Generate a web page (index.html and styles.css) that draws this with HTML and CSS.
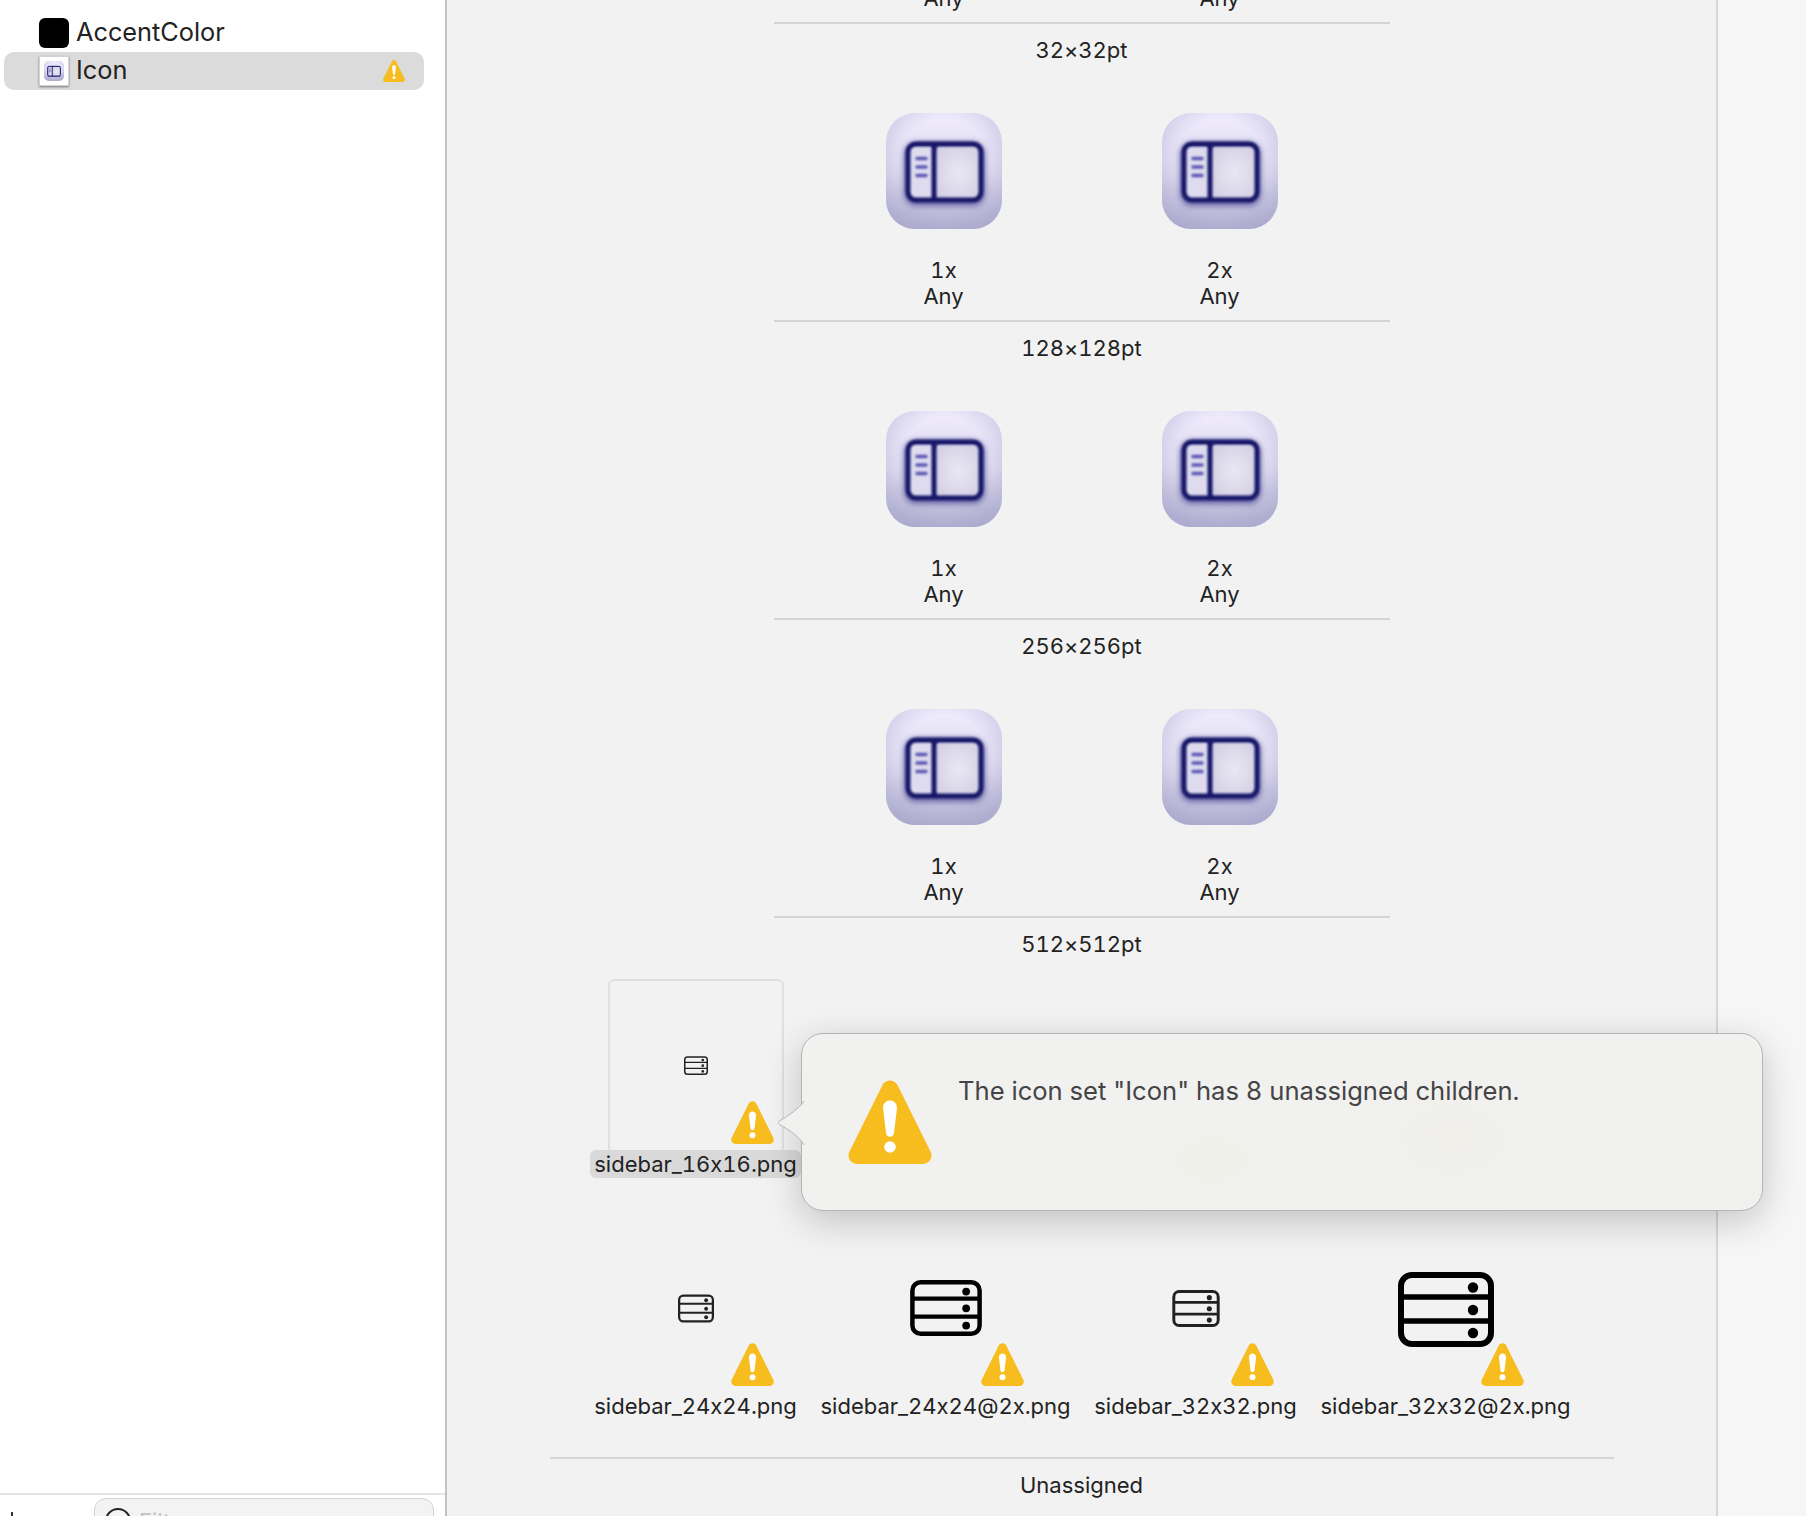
FILE: index.html
```html
<!DOCTYPE html>
<html lang="en">
<head>
<meta charset="utf-8">
<title>Icon set</title>
<link rel="stylesheet" href="styles.css">
</head>
<body>
<svg class="defs" aria-hidden="true">
  <defs>
    <linearGradient id="tile" x1="0" y1="0" x2="0" y2="1">
      <stop offset="0" stop-color="#f1edfe"/>
      <stop offset=".5" stop-color="#dcd8ee"/>
      <stop offset="1" stop-color="#b4b3d3"/>
    </linearGradient>
    <radialGradient id="vignette" cx=".5" cy=".45" r=".72">
      <stop offset=".55" stop-color="#9c9ac4" stop-opacity="0"/>
      <stop offset="1" stop-color="#9c9ac4" stop-opacity=".55"/>
    </radialGradient>
    <radialGradient id="pane" cx=".5" cy=".5" r=".7">
      <stop offset="0" stop-color="#eae7f3"/>
      <stop offset="1" stop-color="#cfcce2"/>
    </radialGradient>
    <filter id="soft" x="-20%" y="-20%" width="140%" height="140%"><feGaussianBlur stdDeviation="3"/></filter>
    <filter id="crisp" x="-10%" y="-10%" width="120%" height="120%"><feGaussianBlur stdDeviation=".8"/></filter>
    <symbol id="app" viewBox="0 0 116 116">
      <rect width="116" height="116" rx="29" fill="url(#tile)"/>
      <rect width="116" height="116" rx="29" fill="url(#vignette)"/>
      <rect x="22" y="33" width="73" height="56" rx="8" fill="none" stroke="#5e5ca0" stroke-width="7" filter="url(#soft)"/>
      <rect x="50" y="33" width="45" height="54" rx="5" fill="url(#pane)"/>
      <rect x="22" y="33" width="26" height="54" rx="5" fill="#dedbee"/>
      <g filter="url(#crisp)">
        <rect x="22" y="31" width="73" height="56" rx="8" fill="none" stroke="#161468" stroke-width="5"/>
        <path d="M48 31v56" stroke="#161468" stroke-width="5"/>
        <path d="M31 45.500h9M31 54h9M31 62.500h9" stroke="#5b58b2" stroke-width="3.500" stroke-linecap="round"/>
      </g>
    </symbol>
    <symbol id="server" viewBox="0 0 96 75">
      <rect x="3" y="3" width="90" height="69" rx="11" fill="none" stroke="currentColor" stroke-width="6"/>
      <path d="M3 25h90M3 49h90" stroke="currentColor" stroke-width="5.500"/>
      <circle cx="75" cy="15.500" r="5.200" fill="currentColor"/>
      <circle cx="75" cy="38" r="5.200" fill="currentColor"/>
      <circle cx="75" cy="61" r="5.200" fill="currentColor"/>
    </symbol>
    <symbol id="warn" viewBox="0 0 84 84">
      <path d="M42 9 9 75.500h66z" fill="#f7bc1e" stroke="#f7bc1e" stroke-width="17" stroke-linejoin="round"/>
      <path d="M35 28c0-10 14-10 14 0l-3 25c-.500 5-7.500 5-8 0z" fill="#fff"/>
      <circle cx="42" cy="67" r="5.800" fill="#fff"/>
    </symbol>
  </defs>
</svg>

<div class="window">
  <aside class="sidebar">
    <ul class="asset-list">
      <li class="asset">
        <span class="swatch"></span>
        <span class="asset-name">AccentColor</span>
      </li>
      <li class="asset asset-selected">
        <span class="asset-thumb"><svg class="asset-thumb-art"><use href="#app"/></svg></span>
        <span class="asset-name">Icon</span>
        <svg class="asset-warn"><use href="#warn"/></svg>
      </li>
    </ul>
    <div class="sidebar-footer">
      <span class="plus"></span>
      <div class="filter">
        <span class="filter-icon"></span>
        <span class="filter-text">Filter</span>
      </div>
    </div>
  </aside>

  <main class="canvas">
    <div class="group group-first">
      <div class="slots">
        <div class="slot"><div class="caption">Any</div></div>
        <div class="slot"><div class="caption">Any</div></div>
      </div>
      <div class="group-label">32×32pt</div>
    </div>

    <div class="group">
      <div class="slots">
        <div class="slot"><svg class="app-icon"><use href="#app"/></svg><div class="caption">1x<br>Any</div></div>
        <div class="slot"><svg class="app-icon"><use href="#app"/></svg><div class="caption">2x<br>Any</div></div>
      </div>
      <div class="group-label">128×128pt</div>
    </div>

    <div class="group">
      <div class="slots">
        <div class="slot"><svg class="app-icon"><use href="#app"/></svg><div class="caption">1x<br>Any</div></div>
        <div class="slot"><svg class="app-icon"><use href="#app"/></svg><div class="caption">2x<br>Any</div></div>
      </div>
      <div class="group-label">256×256pt</div>
    </div>

    <div class="group">
      <div class="slots">
        <div class="slot"><svg class="app-icon"><use href="#app"/></svg><div class="caption">1x<br>Any</div></div>
        <div class="slot"><svg class="app-icon"><use href="#app"/></svg><div class="caption">2x<br>Any</div></div>
      </div>
      <div class="group-label">512×512pt</div>
    </div>

    <div class="group group-wide">
      <div class="unassigned">
        <div class="cell">
          <div class="well well-active">
            <svg class="glyph glyph-16"><use href="#server"/></svg>
            <svg class="well-warn"><use href="#warn"/></svg>
          </div>
          <div class="file file-active">sidebar_16x16.png</div>
        </div>
        <div class="cell cell-empty"></div>
        <div class="cell cell-empty"></div>
        <div class="cell cell-empty"></div>
        <div class="cell">
          <div class="well">
            <svg class="glyph glyph-24"><use href="#server"/></svg>
            <svg class="well-warn"><use href="#warn"/></svg>
          </div>
          <div class="file">sidebar_24x24.png</div>
        </div>
        <div class="cell">
          <div class="well">
            <svg class="glyph glyph-48"><use href="#server"/></svg>
            <svg class="well-warn"><use href="#warn"/></svg>
          </div>
          <div class="file">sidebar_24x24@2x.png</div>
        </div>
        <div class="cell">
          <div class="well">
            <svg class="glyph glyph-32"><use href="#server"/></svg>
            <svg class="well-warn"><use href="#warn"/></svg>
          </div>
          <div class="file">sidebar_32x32.png</div>
        </div>
        <div class="cell">
          <div class="well">
            <svg class="glyph glyph-64"><use href="#server"/></svg>
            <svg class="well-warn"><use href="#warn"/></svg>
          </div>
          <div class="file">sidebar_32x32@2x.png</div>
        </div>
      </div>
      <div class="group-label">Unassigned</div>
    </div>
  </main>

  <aside class="inspector"></aside>
</div>

<div class="popover">
  <svg class="popover-arrow" viewBox="0 0 28 44"><path d="M27 0C22 8 12 14 2.500 20c-1.500 1-1.500 2.500 0 3.500C12 29 22 35 27 44" fill="#f1f1f0" stroke="#b4b4b4" stroke-width="1"/><path d="M27 1h2v42h-2z" fill="#f1f1f0"/></svg>
  <svg class="popover-warn"><use href="#warn"/></svg>
  <p class="popover-text">The icon set "Icon" has 8 unassigned children.</p>
</div>
</body>
</html>
```

FILE: styles.css
```css
* { box-sizing: border-box; }

html, body {
  margin: 0;
  height: 1516px;
  overflow: hidden;
}

body {
  font-family: Inter, "Liberation Sans", sans-serif;
  font-feature-settings: "calt" 0, "tnum" 1;
  color: #222;
  background: #f2f2f2;
  position: relative;
}

.defs {
  position: absolute;
  width: 0;
  height: 0;
}

.window {
  display: flex;
  height: 1516px;
}

/* Sidebar */
.sidebar {
  width: 447px;
  flex: none;
  background: #fff;
  border-right: 2px solid #c3c3c3;
  display: flex;
  flex-direction: column;
}

.asset-list {
  list-style: none;
  margin: 0;
  padding: 14px 21px 0 4px;
  flex: 1;
}

.asset {
  height: 38px;
  display: flex;
  align-items: center;
  gap: 7px;
  padding: 0 19px 0 35px;
  border-radius: 10px;
}

.asset-selected { background: #dbdbdb; }

.swatch {
  width: 30px;
  height: 30px;
  border-radius: 6px;
  background: #000;
}

.asset-thumb {
  width: 30px;
  height: 30px;
  background: #fff;
  border: 1px solid #d2d2d2;
  box-shadow: 0 1px 2px rgba(0, 0, 0, .45);
  display: flex;
  align-items: center;
  justify-content: center;
}

.asset-thumb-art {
  width: 20px;
  height: 20px;
}

.asset-name {
  font-size: 25.300px;
  line-height: 30px;
  margin-bottom: 2px;
  flex: 1;
}

.asset-warn {
  width: 22px;
  height: 22px;
}

.sidebar-footer {
  height: 23px;
  border-top: 2px solid #e4e4e4;
  display: flex;
  gap: 81px;
  padding: 3px 11px 0 11px;
  overflow: hidden;
}

.plus {
  width: 2px;
  height: 10px;
  margin-top: 14px;
  background: #333;
  flex: none;
}

.filter {
  flex: 1;
  height: 40px;
  border: 1px solid #d4d4d4;
  border-radius: 12px;
  background: #f3f3f3;
  display: flex;
  gap: 8px;
  padding: 9px 0 0 10px;
}

.filter-icon {
  width: 26px;
  height: 26px;
  border: 2px solid #222;
  border-radius: 50%;
  flex: none;
}

.filter-text {
  font-size: 22px;
  color: #c2c2c2;
}

/* Canvas */
.canvas {
  flex: 1;
  display: flex;
  flex-direction: column;
  align-items: center;
  background: #f2f2f2;
  border-right: 2px solid #d6d6d6;
  overflow: hidden;
}

.inspector {
  width: 88px;
  flex: none;
  background: #f6f6f6;
}

.group {
  width: 616px;
  margin-top: 49px;
  flex: none;
}

.group-first { margin-top: -15px; }

.group-wide {
  width: 1064px;
  margin-top: 20.500px;
}

.slots {
  display: flex;
  justify-content: center;
  gap: 100px;
  padding-bottom: 11px;
}

.slot {
  width: 176px;
  display: flex;
  flex-direction: column;
  align-items: center;
}

.app-icon {
  width: 116px;
  height: 116px;
  margin-bottom: 28px;
}

.caption {
  font-size: 22px;
  line-height: 26px;
  text-align: center;
}

.group-label {
  border-top: 2px solid #d6d6d6;
  padding-top: 12px;
  font-size: 22px;
  line-height: 28px;
  text-align: center;
}

/* Unassigned artwork */
.unassigned {
  display: grid;
  grid-template-columns: repeat(4, 250px);
  grid-auto-rows: 199px;
  row-gap: 43.500px;
  padding: 0 0 37px 21px;
}

.cell {
  display: flex;
  flex-direction: column;
  align-items: center;
}

.well {
  position: relative;
  width: 176px;
  height: 175px;
  display: flex;
  align-items: center;
  justify-content: center;
  border: 2px solid transparent;
  border-radius: 6px;
}

.well-active { border-color: #dfdfdf; }

.well-warn {
  position: absolute;
  right: 8px;
  bottom: 7px;
  width: 43px;
  height: 43px;
}

.glyph { color: #222; }

.glyph-16 { width: 24px; height: 19px; filter: blur(.4px); }
.glyph-24 { width: 36px; height: 29px; filter: blur(.3px); }
.glyph-32 { width: 48px; height: 37px; filter: blur(.3px); }
.glyph-48 { width: 72px; height: 56px; color: #000; }
.glyph-64 { width: 96px; height: 75px; margin-top: 2px; color: #000; }

.file {
  position: relative;
  margin-top: -3px;
  padding: 0 4px;
  font-size: 22px;
  line-height: 28px;
  white-space: nowrap;
  border-radius: 6px;
}

.file-active { background: #d9d9d9; }

/* Popover */
.popover {
  position: absolute;
  left: 801px;
  top: 1033px;
  width: 962px;
  height: 178px;
  border: 1px solid #b4b4b4;
  border-radius: 22px;
  background:
    radial-gradient(ellipse 110px 70px at 410px 125px, #f0f0ea, transparent),
    radial-gradient(ellipse 120px 80px at 650px 105px, #f0efea, transparent),
    #f1f1f0;
  box-shadow: 0 10px 36px rgba(0, 0, 0, .2);
  display: flex;
  align-items: flex-start;
  gap: 26px;
  padding: 46px 0 0 46px;
}

.popover-arrow {
  position: absolute;
  left: -25px;
  top: 67px;
  width: 28px;
  height: 44px;
}

.popover-warn {
  width: 84px;
  height: 84px;
  flex: none;
}

.popover-text {
  margin: -5px 0 0;
  font-size: 25.600px;
  line-height: 32px;
  color: #444;
}
```
